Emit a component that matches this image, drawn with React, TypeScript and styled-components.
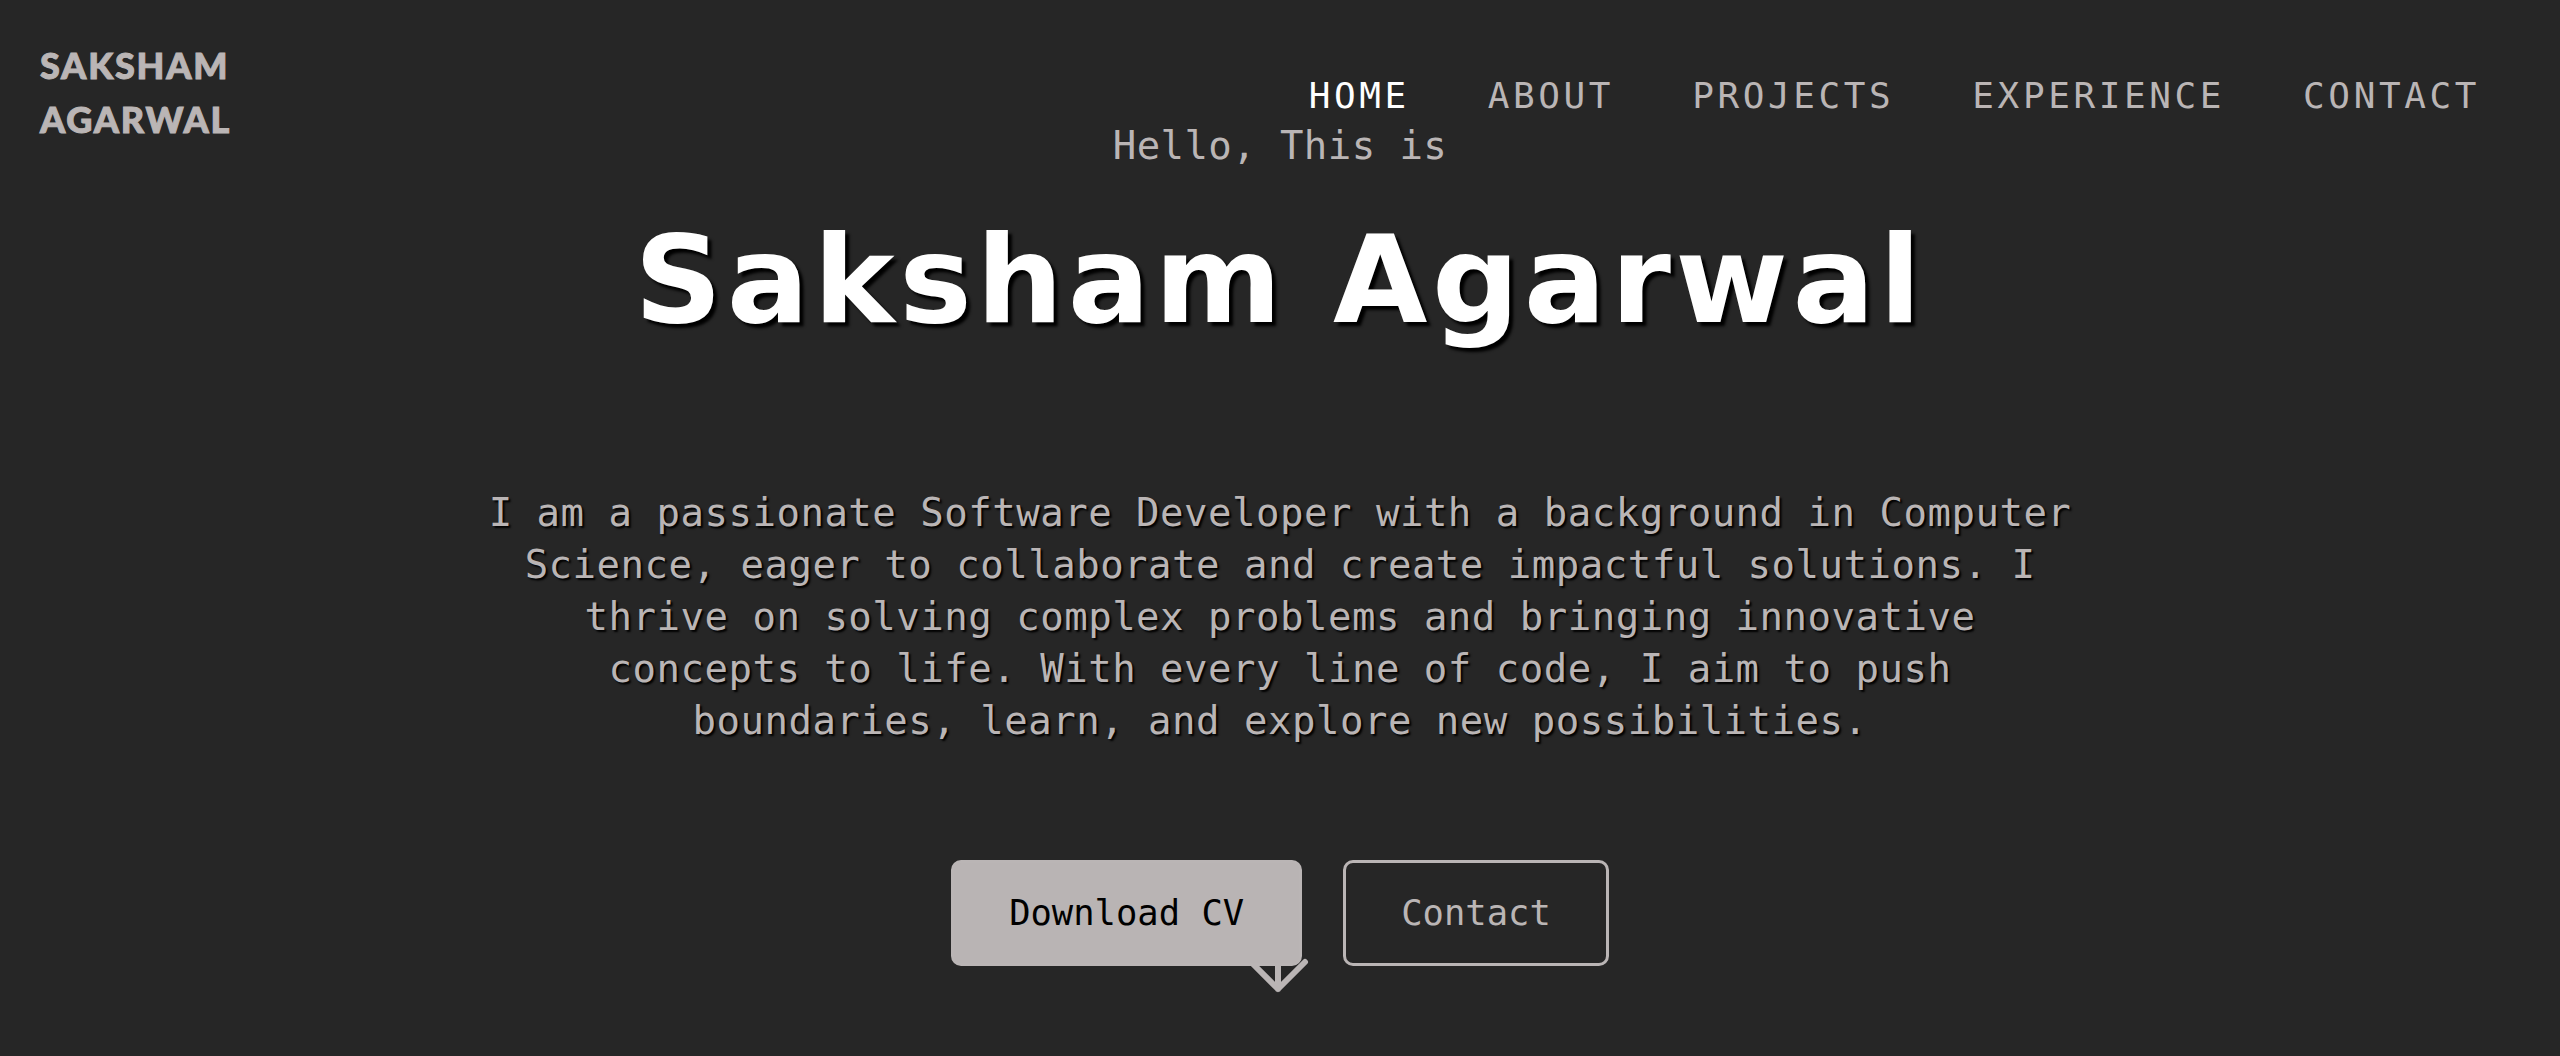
import React from "react";
import styled, { createGlobalStyle } from "styled-components";

const Global = createGlobalStyle`
  html, body {
    margin: 0;
    padding: 0;
    background: #262626;
  }
  body {
    font-family: "DejaVu Sans Mono", "Liberation Mono", monospace;
    color: #bab5b5;
  }
  * { box-sizing: border-box; }
`;

const Page = styled.div`
  position: relative;
  min-height: 1056px;
`;

const Header = styled.header`
  position: absolute;
  top: 0;
  left: 0;
  right: 0;
  display: flex;
  justify-content: space-between;
  align-items: flex-start;
  padding: 38px 80px 0 40px;
  z-index: 5;
`;

const Logo = styled.div`
  font-family: "Lato", "DejaVu Sans", sans-serif;
  font-weight: 900;
  font-size: 36px;
  line-height: 54px;
  letter-spacing: 1.8px;
  color: #bab5b5;
  -webkit-text-stroke: 1px #bab5b5;
  text-transform: uppercase;
`;

const Nav = styled.nav`
  display: flex;
  gap: 78px;
  margin-top: 37px;
`;

const NavLink = styled.a<{ $active?: boolean }>`
  font-family: "DejaVu Sans Mono", monospace;
  font-size: 36px;
  line-height: 42px;
  letter-spacing: 3.6px;
  color: ${(p) => (p.$active ? "#ffffff" : "#bab5b5")};
  text-decoration: none;
  cursor: pointer;
`;

const Hero = styled.main`
  display: flex;
  flex-direction: column;
  align-items: center;
  padding-top: 123px;
`;

const Hello = styled.p`
  margin: 0;
  font-size: 39px;
  line-height: 46px;
  letter-spacing: 0.4px;
  color: #bab5b5;
`;

const Title = styled.h1`
  margin: 50px 0 0;
  font-family: "DejaVu Sans", "Inter", sans-serif;
  font-weight: 700;
  font-size: 122px;
  line-height: 122px;
  letter-spacing: 4.5px;
  color: #ffffff;
  text-shadow: 4px 4px 3px #000000;
  white-space: nowrap;
`;

const Intro = styled.p`
  margin: 146px 0 0;
  width: 1596px;
  font-size: 39px;
  line-height: 52px;
  letter-spacing: 0.5px;
  text-align: center;
  color: #bab5b5;
  text-shadow: 2px 2px 2px #000000;
`;

const Actions = styled.div`
  display: flex;
  gap: 41px;
  margin-top: 113px;
`;

const ButtonWrap = styled.div`
  position: relative;
  z-index: 0;
`;

const Button = styled.button<{ $filled?: boolean }>`
  position: relative;
  z-index: 1;
  font-family: "DejaVu Sans Mono", monospace;
  font-size: 35.5px;
  line-height: 42px;
  padding: 29px 55px;
  border: 3px solid #bab5b5;
  border-radius: 10px;
  background: ${(p) => (p.$filled ? "#b9b4b4" : "transparent")};
  color: ${(p) => (p.$filled ? "#000000" : "#bab5b5")};
  cursor: pointer;
`;

const DownloadMark = styled.svg`
  position: absolute;
  right: -9px;
  bottom: -30px;
  width: 66px;
  height: 80px;
  z-index: 0;
`;

export default function App() {
  const links = ["HOME", "ABOUT", "PROJECTS", "EXPERIENCE", "CONTACT"];
  return (
    <Page>
      <Global />
      <Header>
        <Logo>
          Saksham
          <br />
          Agarwal
        </Logo>
        <Nav>
          {links.map((l, i) => (
            <NavLink key={l} $active={i === 0}>
              {l}
            </NavLink>
          ))}
        </Nav>
      </Header>
      <Hero>
        <Hello>Hello, This is</Hello>
        <Title>Saksham Agarwal</Title>
        <Intro>
          I am a passionate Software Developer with a background in Computer
          Science, eager to collaborate and create impactful solutions. I
          thrive on solving complex problems and bringing innovative concepts
          to life. With every line of code, I aim to push boundaries, learn,
          and explore new possibilities.
        </Intro>
        <Actions>
          <ButtonWrap>
            <Button $filled>Download CV</Button>
            <DownloadMark viewBox="0 0 66 80" fill="none">
              <path
                d="M33 4V73M6 46L33 73L60 46"
                stroke="#bab5b5"
                strokeWidth="6"
                strokeLinecap="round"
                strokeLinejoin="round"
              />
            </DownloadMark>
          </ButtonWrap>
          <ButtonWrap>
            <Button>Contact</Button>
          </ButtonWrap>
        </Actions>
      </Hero>
    </Page>
  );
}
